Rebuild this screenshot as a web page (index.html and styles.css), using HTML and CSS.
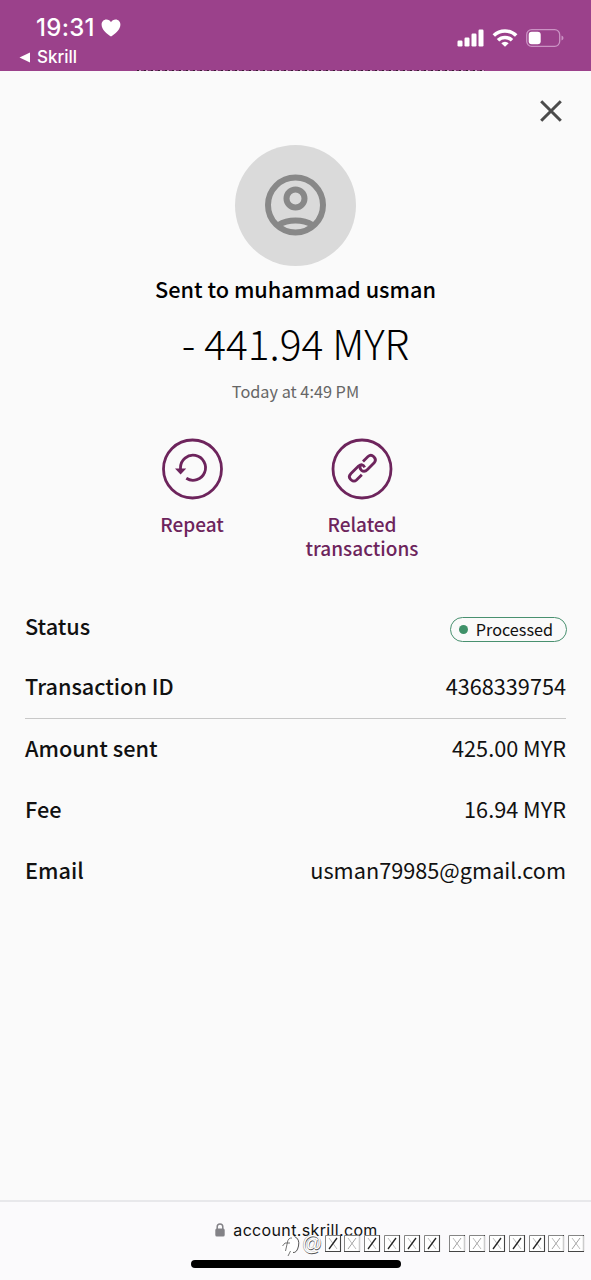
FILE: index.html
```
<!DOCTYPE html>
<html lang="en">
<head>
  <meta charset="UTF-8">
  <meta name="viewport" content="width=device-width, initial-scale=1.0">
  <title>Transaction details</title>
  <link rel="stylesheet" href="styles.css">
</head>
<body>

  <!-- Phone status bar -->
  <header class="status-bar">
    <div class="status-left">
      <div class="clock">
        <span class="time">19:31</span>
        <svg class="heart" width="20" height="18" viewBox="0 0 20 18"><path d="M10 17.6C6 14.8.6 10.800.6 5.800.6 2.700 2.700.6 5.400.6 7.400.6 9 1.600 10 3.200 11 1.600 12.600.6 14.600.6 17.300.6 19.400 2.700 19.400 5.800 19.400 10.800 14 14.800 10 17.600Z" fill="#fff"/></svg>
      </div>
      <div class="back">
        <svg width="12" height="11" viewBox="0 0 12 11"><path d="M.5 5.500 11 .5V10.500Z" fill="#fff"/></svg>
        <span class="back-text">Skrill</span>
      </div>
    </div>
    <div class="status-icons">
      <svg width="27" height="18" viewBox="0 0 27 18" fill="#fff">
        <rect x="0.500" y="11.500" width="5" height="6" rx="1.200"/>
        <rect x="7.500" y="8.500" width="5" height="9" rx="1.200"/>
        <rect x="14.500" y="4.500" width="5" height="13" rx="1.200"/>
        <rect x="21.500" y="0.500" width="5" height="17" rx="1.200"/>
      </svg>
      <svg class="wifi" width="26" height="18" viewBox="0 0 26 18" fill="none" stroke="#fff" stroke-width="3.500">
        <path d="M1.800 6.600A16 16 0 0 1 24.200 6.600"/>
        <path d="M6 11.300A10 10 0 0 1 20 11.300"/>
        <path d="M13 17.800 9.300 14.300A5.300 5.300 0 0 1 16.700 14.300Z" fill="#fff" stroke="none"/>
      </svg>
      <svg width="38" height="18" viewBox="0 0 38 18">
        <rect x="0.700" y="0.700" width="33" height="16.600" rx="5" fill="none" stroke="#cb93c4" stroke-width="1.300"/>
        <rect x="2.700" y="2.700" width="12" height="12.600" rx="3" fill="#fff"/>
        <path d="M35.500 6.500Q37.500 7.300 37.500 9T35.500 11.500Z" fill="#cb93c4"/>
      </svg>
    </div>
    <div class="page-edge"></div>
  </header>

  <main class="sheet">
    <div class="close-row">
      <svg width="24" height="24" viewBox="0 0 24 24" stroke="#4b4b4b" stroke-width="3"><path d="M2.200 2.200 21.800 21.800M21.800 2.200 2.200 21.800"/></svg>
    </div>

    <!-- Summary -->
    <section class="summary">
      <div class="avatar">
        <svg width="62" height="62" viewBox="0 0 62 62" fill="none" stroke="#888" stroke-width="6">
          <circle cx="30.500" cy="31" r="27.500"/>
          <circle cx="30.500" cy="24.500" r="9"/>
          <path d="M13.500 51Q20.500 46.500 30.500 46.500T47.500 51"/>
        </svg>
      </div>
      <h1 class="recipient">Sent to muhammad usman</h1>
      <p class="amount">- 441.94 MYR</p>
      <p class="date">Today at 4:49 PM</p>
    </section>

    <section class="actions">
      <div class="action">
        <svg width="62" height="62" viewBox="0 0 62 62" fill="none" stroke="#6d245c" stroke-width="2.800">
          <circle cx="31.500" cy="31" r="29"/>
          <path d="M19.500 31V29.700A12.500 12.500 0 1 1 25.300 40.300"/>
          <path d="M14 30.500H25.200L19.600 36.500Z" fill="#6d245c" stroke="none"/>
        </svg>
        <span>Repeat</span>
      </div>
      <div class="action">
        <svg width="62" height="62" viewBox="0 0 62 62" fill="none" stroke="#6d245c" stroke-width="2.800">
          <circle cx="31" cy="31" r="29"/>
          <path d="M32 23.500 37 18.500Q40 16 42.500 18.500L43.200 19.200Q45.700 22 43.200 24.700L36.500 31.500Q33.500 34.500 30.500 32.300Q28 30 29.500 27.500"/>
          <path d="M33.700 29.300Q31.500 25 27.500 28L20 35.500Q17 38.500 19.300 41L20.300 42Q23 44.300 25.500 42L30.800 36.700"/>
        </svg>
        <span>Related transactions</span>
      </div>
    </section>

    <!-- Details -->
    <dl class="details">
      <div class="row"><dt>Status</dt><dd class="badge"><i class="dot"></i><span>Processed</span></dd></div>
      <div class="row row-line"><dt>Transaction ID</dt><dd>4368339754</dd></div>
      <div class="row"><dt>Amount sent</dt><dd>425.00 MYR</dd></div>
      <div class="row"><dt>Fee</dt><dd>16.94 MYR</dd></div>
      <div class="row"><dt>Email</dt><dd>usman79985@gmail.com</dd></div>
    </dl>
  </main>

  <!-- Browser address bar -->
  <footer class="browser-bar">
    <div class="address">
      <svg width="10" height="14" viewBox="0 0 10 14"><rect x="0.300" y="5.500" width="9.400" height="8" rx="1.500" fill="#838287"/><path d="M2.200 6V3.800a2.800 2.800 0 0 1 5.600 0V6" fill="none" stroke="#838287" stroke-width="1.500"/></svg>
      <span>account.skrill.com</span>
    </div>
    <div class="home-bar"></div>
    <div class="watermark">
      <svg class="mark-logo" width="22" height="24" viewBox="0 0 22 24">
        <circle cx="9" cy="11" r="9" fill="#fff"/>
        <path d="M14.500 2.500Q20 5 18.500 12T13 18.500" fill="none" stroke="#555" stroke-width="1"/>
        <path d="M12 4Q8 3.500 7.300 9L5.500 17M2.500 12 5 9H10M8 22 10.500 17" fill="none" stroke="#666" stroke-width="0.900"/>
      </svg>
      <span class="mark-at">@</span>
      <svg class="mark-boxes" width="262" height="18" viewBox="0 0 262 18">
        <defs>
          <g id="box">
            <rect width="16" height="17" fill="#fff"/>
            <path d="M.5 17V.5H16" fill="none" stroke="#777" stroke-width="0.900"/>
            <path d="M0 16.500H15.500V0" fill="none" stroke="#444" stroke-width="1.100"/>
            <path d="M4 3 12 14" stroke="#aaa" stroke-width="0.800"/>
          </g>
          <g id="dark"><use href="#box"/><path d="M12 3 4 14" stroke="#222" stroke-width="1.300"/></g>
          <g id="light"><use href="#box"/><path d="M12 3 4 14" stroke="#888" stroke-width="0.800"/><path d="M15.500 1V16" stroke="#ccc" stroke-width="1.200"/></g>
        </defs>
        <use href="#dark" x="0"/><use href="#light" x="19"/><use href="#dark" x="39"/>
        <use href="#dark" x="59"/><use href="#dark" x="79"/><use href="#dark" x="99"/>
        <use href="#light" x="124"/><use href="#light" x="144"/><use href="#dark" x="164"/>
        <use href="#dark" x="184"/><use href="#dark" x="204"/><use href="#light" x="223"/><use href="#light" x="243"/>
      </svg>
    </div>
  </footer>

</body>
</html>
```
FILE: styles.css
```
/* Global styling */
* { box-sizing: border-box; }
body { margin: 0; height: 1280px; display: flex; flex-direction: column; overflow: hidden; background-color: #fafafa; color: #111; font-family: "Noto Sans CJK SC", "Noto Sans", sans-serif; }
h1, p, dl, dd { margin: 0; }
svg { display: block; flex: none; }

/* Status bar */
.status-bar { position: relative; height: 71px; flex: none; display: flex; justify-content: space-between; padding: 14px 27px 0 19px; background-color: #9b418b; color: #fff; font-family: Inter, sans-serif; }
.clock { display: flex; align-items: center; height: 28px; padding-left: 17px; gap: 6px; }
.time { font-size: 24px; font-weight: 500; line-height: 28px; letter-spacing: 0.3px; }
.back { display: flex; align-items: center; gap: 6px; height: 22px; margin-top: 4px; }
.back-text { font-size: 17px; line-height: 22px; font-weight: 500; }
.status-icons { display: flex; gap: 8px; padding-top: 15px; }
.page-edge { position: absolute; left: 137px; bottom: 0; width: 348px; height: 1px; background: repeating-linear-gradient(90deg, #3a1a34 0 2px, #c992c0 2px 4px, #7e3471 4px 7px); }

/* Sheet */
.sheet { flex: 1; padding: 0 25px; }
.close-row { display: flex; justify-content: flex-end; padding: 28px 3px 0 0; }
.summary { display: flex; flex-direction: column; align-items: center; padding-top: 22px; }
.avatar { width: 121px; height: 121px; padding-bottom: 2px; border-radius: 50%; background-color: #dadada; display: flex; align-items: center; justify-content: center; }
.recipient { margin-top: 8px; font-size: 21.7px; font-weight: 500; line-height: 30px; color: #000; }
.amount { margin-top: 11px; font-size: 40.7px; font-weight: 300; line-height: 56px; color: #000; }
.date { margin-top: 8px; font-size: 16.300px; line-height: 24px; color: #666; }

/* Actions */
.actions { display: flex; justify-content: center; gap: 50px; margin-top: 35px; padding-right: 37px; }
.action { width: 120px; display: flex; flex-direction: column; align-items: center; gap: 12px; color: #6d245c; font-size: 19px; font-weight: 500; line-height: 24px; text-align: center; }

/* Details */
.details { margin-top: 37px; }
.row { display: flex; justify-content: space-between; align-items: center; height: 61px; padding-bottom: 4px; font-size: 21.7px; line-height: 30px; }
.row dt { font-weight: 500; }
.row-line { border-bottom: 1px solid #c8c8c8; }
.badge { display: flex; align-items: center; gap: 8px; height: 25px; margin: 7px -1px 0 0; padding: 0 13px 0 8px; border: 1.500px solid #48906f; border-radius: 13px; font-size: 16.200px; line-height: 21px; }
.dot { width: 9px; height: 9px; border-radius: 50%; background-color: #3f9169; }

/* Browser bar */
.browser-bar { position: relative; height: 80px; flex: none; display: flex; flex-direction: column; align-items: center; border-top: 2px solid #e8e8eb; background-color: #fbfafc; }
.address { display: flex; align-items: center; gap: 8px; height: 24px; margin-top: 16px; padding-left: 2px; font-family: Inter, sans-serif; font-size: 16px; letter-spacing: 0.35px; color: #111; }
.home-bar { width: 210px; height: 8px; margin-top: 18px; border-radius: 4px; background-color: #000; }
.watermark { position: absolute; left: 280px; top: 32px; display: flex; align-items: flex-start; }
.mark-at { width: 20px; font-family: "Liberation Sans", sans-serif; font-size: 20px; line-height: 19px; color: #fff; text-shadow: 0.6px 0.6px 0 #555, -0.4px -0.4px 0 #999; }
.mark-boxes { margin: 1px 0 0 3px; }
```
